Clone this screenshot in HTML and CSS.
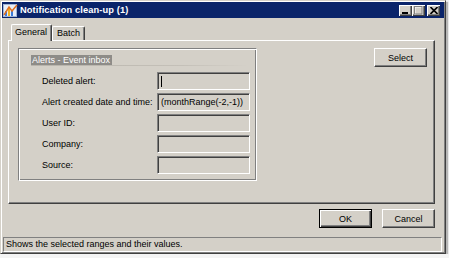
FILE: index.html
```html
<!DOCTYPE html>
<html lang="en">
<head>
  <meta charset="UTF-8">
  <title>Notification clean-up (1)</title>
  <link rel="stylesheet" href="styles.css">
</head>
<body>

  <!-- VENTANA
   ================================================== -->
  <div class="window">

    <div class="titlebar">
      <svg class="app-icon" width="15" height="15" viewBox="0 0 15 15">
        <rect x="0.5" y="1.5" width="13" height="12" fill="#e8eef8" stroke="#9fb3d6"/>
        <rect x="2" y="8" width="2" height="5" fill="#3c7bd8"/>
        <rect x="5" y="5" width="2" height="8" fill="#f0b020"/>
        <rect x="8" y="7" width="2" height="6" fill="#3c7bd8"/>
        <path d="M1 12 L6 4 L9 8 L14 2" stroke="#e07020" stroke-width="1.5" fill="none"/>
      </svg>
      <span class="title">Notification clean-up (1)</span>
      <div class="caption-buttons">
        <span class="cap-btn"><svg width="7" height="7" viewBox="0 0 7 7"><rect x="0" y="5" width="6" height="2" fill="#000"/></svg></span>
        <span class="cap-btn"><svg width="9" height="9" viewBox="0 0 9 9"><rect x="1" y="1" width="8" height="8" fill="none" stroke="#fff"/><rect x="0.5" y="0.5" width="7.5" height="7.5" fill="none" stroke="#808080"/></svg></span>
        <span class="cap-btn close"><svg width="8" height="7" viewBox="0 0 8 7"><path d="M0.5 0 L7.5 7 M7.5 0 L0.5 7" stroke="#000" stroke-width="1.6"/></svg></span>
      </div>
    </div>

    <div class="client">

      <!-- PESTAÑAS -->
      <div class="tabs">
        <span class="tab active">General</span>
        <span class="tab">Batch</span>
      </div>

      <div class="panel">
        <div class="group">
          <div class="group-header"><span class="group-title">Alerts - Event inbox</span></div>
          <div class="fields">
            <label class="field-label">Deleted alert:</label>
            <div class="field"><span class="caret"></span></div>
            <label class="field-label">Alert created date and time:</label>
            <div class="field">(monthRange(-2,-1))</div>
            <label class="field-label">User ID:</label>
            <div class="field"></div>
            <label class="field-label">Company:</label>
            <div class="field"></div>
            <label class="field-label">Source:</label>
            <div class="field"></div>
          </div>
        </div>
        <button class="btn select-btn" type="button">Select</button>
      </div>

      <!-- BOTONES -->
      <div class="actions">
        <button class="btn default" type="button">OK</button>
        <button class="btn" type="button">Cancel</button>
      </div>

      <div class="statusbar">Shows the selected ranges and their values.</div>
    </div>

  </div>
</body>
</html>
```

FILE: styles.css
```css
:root {
  --face: #d4d0c8;
  --shadow: #808080;
  --dark: #404040;
  --navy: #0a246a;
}

* { box-sizing: border-box; }

body {
  margin: 0;
  background: #f4f4f4;
  font-family: 'Liberation Sans', Arial, sans-serif;
  font-size: 9px;
  color: #000;
}

.window {
  width: 446px;
  height: 254px;
  background: var(--face);
  border: 1px solid;
  border-color: var(--face) var(--dark) var(--dark) var(--face);
  box-shadow: inset 1px 1px #fff, inset -1px -1px var(--shadow), 2px 2px 1px rgba(0,0,0,0.25);
  padding: 1px;
  display: flex;
  flex-direction: column;
}

.titlebar {
  height: 17px;
  background: var(--navy);
  display: flex;
  align-items: center;
  padding-left: 1px;
}
  .app-icon {
    flex: none;
    margin-right: 2px;
  }
  .title {
    color: #fff;
    font-weight: bold;
    font-size: 9.3px;
    letter-spacing: 0.1px;
  }
  .caption-buttons {
    margin-left: auto;
    margin-right: 4px;
    display: flex;
  }
    .cap-btn {
      width: 13px;
      height: 11px;
      background: var(--face);
      box-shadow: inset 1px 1px #fff, inset -1px -1px var(--dark), inset -2px -2px var(--shadow);
      display: flex;
      align-items: center;
      justify-content: center;
    }
    .cap-btn.close {
      margin-left: 2px;
    }

.client {
  flex: 1;
  display: flex;
  flex-direction: column;
  padding: 6px 9px 0 6px;
}

.tabs {
  display: flex;
  height: 16px;
  padding-left: 3px;
  align-items: flex-end;
  position: relative;
  z-index: 1;
}
  .tab {
    height: 14px;
    padding: 0 4px;
    line-height: 13px;
    background: var(--face);
    border-top: 1px solid #fff;
    border-left: 1px solid #fff;
    border-right: 1px solid var(--dark);
    box-shadow: inset -1px 0 var(--shadow);
    border-radius: 2px 2px 0 0;
  }
  .tab.active {
    height: 17px;
    margin-bottom: -1px;
    padding: 0 4px 0 3px;
    line-height: 15px;
  }

.panel {
  height: 164px;
  background: var(--face);
  border: 1px solid;
  border-color: #fff var(--dark) var(--dark) #fff;
  box-shadow: inset -1px -1px var(--shadow);
  display: flex;
  align-items: flex-start;
  padding: 7px 7px 0 9px;
}

.group {
  width: 239px;
  height: 133px;
  border: 1px solid;
  border-color: var(--shadow) #fff #fff var(--shadow);
  box-shadow: inset 1px 1px #fff, inset -1px -1px var(--shadow);
  padding: 6px 6px 0 12px;
}
  .group-header {
    display: flex;
    border-bottom: 1px solid;
    border-image: linear-gradient(to right, #b8b4ac, #c4c0b8 70%, var(--face)) 1;
    margin-right: 4px;
  }
    .group-title {
      background: #8e8c88;
      color: #fff;
      font-size: 9px;
      line-height: 10px;
      padding: 0 2px 0 1px;
    }
  .fields {
    display: grid;
    grid-template-columns: 115px 93px;
    grid-auto-rows: 18px;
    row-gap: 3px;
    align-items: center;
    margin-top: 6px;
    padding-left: 11px;
  }
    .field-label {
      white-space: nowrap;
    }
    .field {
      height: 18px;
      border: 1px solid;
      border-color: var(--shadow) #fff #fff var(--shadow);
      box-shadow: inset 1px 1px var(--dark), inset -1px -1px var(--face);
      padding: 0 3px;
      line-height: 16px;
      white-space: nowrap;
      overflow: hidden;
    }
      .caret {
        display: inline-block;
        width: 1px;
        height: 11px;
        margin-top: 3px;
        background: #000;
        vertical-align: top;
      }

.btn {
  width: 53px;
  height: 19px;
  background: var(--face);
  font: inherit;
  color: #000;
  border: 1px solid;
  border-color: #fff var(--dark) var(--dark) #fff;
  box-shadow: inset -1px -1px var(--shadow);
  padding: 0;
}
.btn.default {
  border-color: #000;
  box-shadow: inset 1px 1px #fff, inset -1px -1px var(--dark), inset -2px -2px var(--shadow);
}
.select-btn {
  margin-left: auto;
}

.actions {
  display: flex;
  justify-content: flex-end;
  gap: 10px;
  padding-top: 5px;
}

.statusbar {
  margin: 9px -7px 0 -5px;
  height: 15px;
  border: 1px solid;
  border-color: var(--shadow) #fff #fff var(--shadow);
  padding-left: 2px;
  line-height: 13px;
}
```
